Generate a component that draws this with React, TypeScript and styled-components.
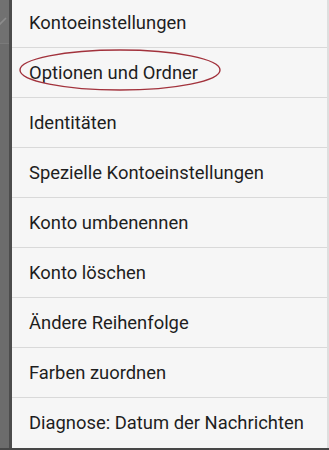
import React from 'react';
import styled, { createGlobalStyle } from 'styled-components';

const GlobalStyle = createGlobalStyle`
  html, body {
    margin: 0;
    padding: 0;
    width: 329px;
    height: 450px;
    overflow: hidden;
    background: #474747;
  }
`;

const items = [
  'Kontoeinstellungen',
  'Optionen und Ordner',
  'Identitäten',
  'Spezielle Kontoeinstellungen',
  'Konto umbenennen',
  'Konto löschen',
  'Ändere Reihenfolge',
  'Farben zuordnen',
  'Diagnose: Datum der Nachrichten',
];

const Screen = styled.div`
  display: flex;
  flex-direction: row;
  width: 329px;
  height: 448px;
  overflow: hidden;
  font-family: Roboto, "Noto Sans", sans-serif;
`;

const Backdrop = styled.div`
  width: 9px;
  flex-shrink: 0;
  display: flex;
  flex-direction: column;
  background: #6c6c6c;
  border-right: 3px solid #4c4c4c;
`;

const BackdropRow = styled.div`
  height: 43px;
  display: flex;
  align-items: center;
  border-bottom: 1px solid #7a7a7a;
  background: #717171;
`;

const Menu = styled.ul`
  flex: 1;
  list-style: none;
  margin: -2px 0 0;
  padding: 0;
  background: #f6f6f6;
  border-right: 2px solid #dedede;
`;

const Item = styled.li<{ $last?: boolean }>`
  position: relative;
  height: 49px;
  display: flex;
  align-items: center;
  padding-left: 17px;
  font-size: 18.4px;
  color: #1e1e1e;
  border-bottom: 1px solid ${({ $last }) => ($last ? '#f6f6f6' : '#d9d9d9')};
  white-space: nowrap;
`;

const Circle = styled.svg`
  position: absolute;
  left: 7px;
  top: 1px;
  overflow: visible;
`;

const App = () => (
  <>
    <GlobalStyle />
    <Screen>
      <Backdrop>
        <BackdropRow>
          <svg width="9" height="14" viewBox="0 0 9 14">
            <path d="M-4 7L-1 10L6 3" stroke="#8c8c8c" strokeWidth="1.6" fill="none" />
          </svg>
        </BackdropRow>
      </Backdrop>
      <Menu>
        {items.map((label, i) => (
          <Item key={label} $last={i === items.length - 1}>
            {label}
            {i === 1 && (
              <Circle width="202" height="42" viewBox="0 0 202 42">
                <ellipse cx="101" cy="21" rx="100" ry="20" fill="none" stroke="#a2323c" strokeWidth="1.4" />
              </Circle>
            )}
          </Item>
        ))}
      </Menu>
    </Screen>
  </>
);

export default App;
